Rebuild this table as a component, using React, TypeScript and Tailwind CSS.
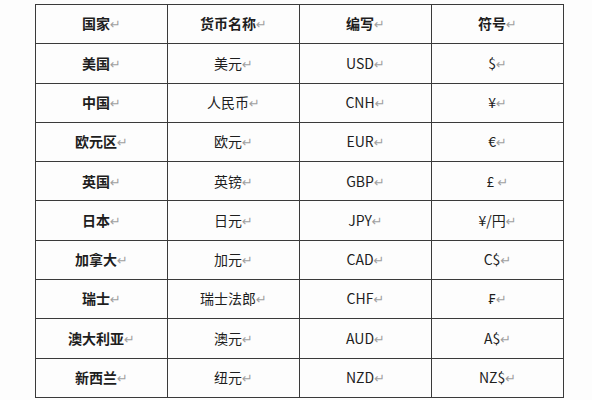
import React from "react";

const rows: [string, string, string, string][] = [
  ["美国", "美元", "USD", "$"],
  ["中国", "人民币", "CNH", "¥"],
  ["欧元区", "欧元", "EUR", "€"],
  ["英国", "英镑", "GBP", "£ "],
  ["日本", "日元", "JPY", "¥/円"],
  ["加拿大", "加元", "CAD", "C$"],
  ["瑞士", "瑞士法郎", "CHF", "₣"],
  ["澳大利亚", "澳元", "AUD", "A$"],
  ["新西兰", "纽元", "NZD", "NZ$"],
];

const Mark = () => (
  <span
    className="text-[#a0a0a0] text-[13px]"
    style={{ fontFamily: '"DejaVu Sans", sans-serif' }}
  >
    ↵
  </span>
);

function Cell({ text, bold }: { text: string; bold?: boolean }) {
  return (
    <td className="border-[1.5px] border-[#3a3a3a] text-center align-middle p-0 whitespace-pre">
      <span className={bold ? "font-bold" : "font-normal"}>{text}</span>
      <Mark />
    </td>
  );
}

export default function App() {
  return (
    <div
      className="w-[592px] h-[400px] bg-[#fdfdfd] overflow-hidden pt-[4px] pl-[35px] text-[14px] text-[#1e1e1e]"
      style={{ fontFamily: '"Noto Sans CJK SC", "Noto Sans", sans-serif' }}
    >
      <table className="border-collapse table-fixed w-[529px]">
        <tbody>
          <tr className="h-[39.3px]">
            <Cell text="国家" bold />
            <Cell text="货币名称" bold />
            <Cell text="编写" bold />
            <Cell text="符号" bold />
          </tr>
          {rows.map((r) => (
            <tr key={r[0]} className="h-[39.3px]">
              <Cell text={r[0]} bold />
              <Cell text={r[1]} />
              <Cell text={r[2]} />
              <Cell text={r[3]} />
            </tr>
          ))}
        </tbody>
      </table>
    </div>
  );
}
